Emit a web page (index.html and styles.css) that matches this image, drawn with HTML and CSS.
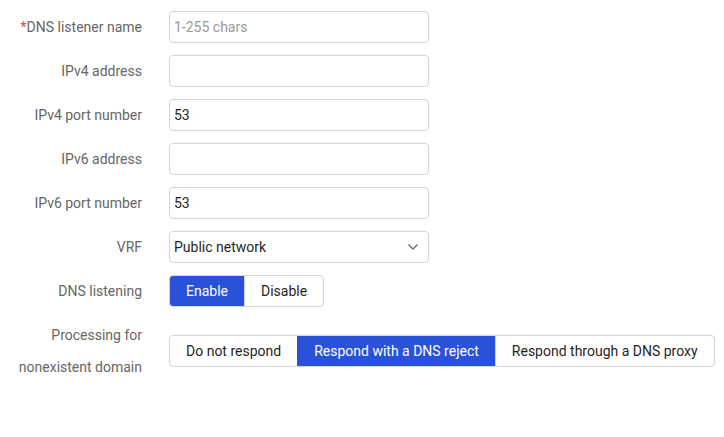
FILE: index.html
```html
<!DOCTYPE html>
<html>
<head>
<meta charset="utf-8">
<link rel="stylesheet" href="styles.css">
</head>
<body>
<form class="form">
  <div class="row">
    <label class="label"><span class="req">*</span>DNS listener name</label>
    <div class="field"><input class="input" type="text" placeholder="1-255 chars"></div>
  </div>
  <div class="row">
    <label class="label">IPv4 address</label>
    <div class="field"><input class="input" type="text"></div>
  </div>
  <div class="row">
    <label class="label">IPv4 port number</label>
    <div class="field"><input class="input" type="text" value="53"></div>
  </div>
  <div class="row">
    <label class="label">IPv6 address</label>
    <div class="field"><input class="input" type="text"></div>
  </div>
  <div class="row">
    <label class="label">IPv6 port number</label>
    <div class="field"><input class="input" type="text" value="53"></div>
  </div>
  <div class="row">
    <label class="label">VRF</label>
    <div class="field">
      <div class="select">
        <span class="select-value">Public network</span>
        <svg class="chevron" width="12" height="8" viewBox="0 0 12 8"><path d="M1.5 1.5 L6 6 L10.5 1.5" fill="none" stroke="#5a6b8c" stroke-width="1.3"/></svg>
      </div>
    </div>
  </div>
  <div class="row">
    <label class="label">DNS listening</label>
    <div class="field">
      <div class="seg">
        <span class="seg-btn active">Enable</span>
        <span class="seg-btn">Disable</span>
      </div>
    </div>
  </div>
  <div class="row">
    <label class="label">Processing for<br>nonexistent domain</label>
    <div class="field">
      <div class="seg">
        <span class="seg-btn">Do not respond</span>
        <span class="seg-btn active">Respond with a DNS reject</span>
        <span class="seg-btn">Respond through a DNS proxy</span>
      </div>
    </div>
  </div>
</form>
</body>
</html>
```
FILE: styles.css
```css
* { box-sizing: border-box; }
html, body { margin: 0; padding: 0; background: #fff; }
body {
  font-family: Roboto, "Liberation Sans", sans-serif;
  font-size: 14px;
  color: #1f1f1f;
}
.form {
  padding-top: 11px;
  display: flex;
  flex-direction: column;
  gap: 12px;
}
.row {
  display: flex;
  align-items: center;
  gap: 27px;
}
.label {
  width: 142px;
  flex: none;
  text-align: right;
  color: #666;
  line-height: 32px;
}
.req { color: #e5433b; }
.field { flex: none; }
.input, .select {
  width: 260px;
  height: 32px;
  border: 1px solid #d4d4d4;
  border-radius: 4px;
  padding: 0 4px;
  font: inherit;
  color: #1f1f1f;
  background: #fff;
  outline: none;
  display: block;
}
.input::placeholder { color: #999; }
.select {
  display: flex;
  align-items: center;
  justify-content: space-between;
  padding-right: 9px;
}
.chevron { display: block; }
.seg {
  display: flex;
  height: 32px;
  border: 1px solid #d4d4d4;
  border-radius: 4px;
  overflow: hidden;
}
.seg-btn {
  display: flex;
  align-items: center;
  padding: 0 16px;
  color: #1f1f1f;
  border-left: 1px solid #d4d4d4;
}
.seg-btn:first-child { border-left: none; }
.seg-btn.active {
  background: #2a52d8;
  color: #fff;
  border-left-color: #2a52d8;
}
```
